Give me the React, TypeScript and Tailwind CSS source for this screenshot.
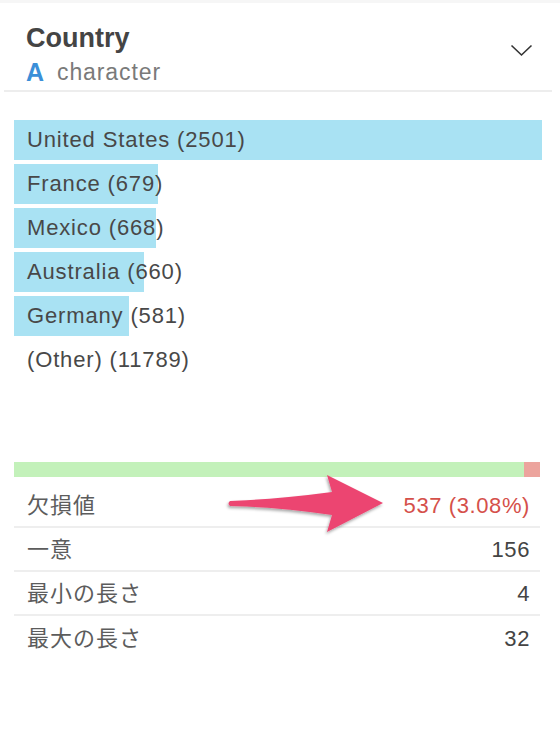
import React from 'react';

const bars = [
  { label: 'United States (2501)', width: 528 },
  { label: 'France (679)', width: 144 },
  { label: 'Mexico (668)', width: 142 },
  { label: 'Australia (660)', width: 130 },
  { label: 'Germany (581)', width: 115 },
  { label: '(Other) (11789)', width: 0 },
];

const stats = [
  { label: '欠損値', value: '537 (3.08%)', red: true },
  { label: '一意', value: '156' },
  { label: '最小の長さ', value: '4' },
  { label: '最大の長さ', value: '32' },
];

function Arrow() {
  return (
    <svg
      className="absolute left-[206px] top-[3px]"
      width="180"
      height="80"
      viewBox="0 0 180 80"
    >
      <defs>
        <filter id="arrowShadow" x="-20%" y="-30%" width="140%" height="160%">
          <feDropShadow dx="-1" dy="2" stdDeviation="1.6" floodColor="#000" floodOpacity="0.35" />
        </filter>
      </defs>
      <path
        d="M10 36 Q60 34 112 27 L107 10 L163 38 L107 67 L112 50 Q60 42 10 41 Q7 38.5 10 36 Z"
        fill="#ec4571"
        filter="url(#arrowShadow)"
      />
    </svg>
  );
}

export default function App() {
  return (
    <div className="min-h-screen w-full bg-white font-['Liberation_Sans','Noto_Sans_CJK_JP',sans-serif]">
      <div className="h-[3px] bg-[#f6f6f6]" />
      <div className="pl-[4px] pr-[8px]">
        <div className="flex justify-between pl-[22px] pr-[19px] pt-[19px] pb-[4px]">
          <div>
            <div className="text-[27px] leading-[32px] font-bold text-[#444444]">Country</div>
            <div className="mt-[4px] flex items-center text-[23px] leading-[28px]">
              <span className="w-[31px] text-[25px] font-bold text-[#3b8fd8]">A</span>
              <span className="tracking-[0.9px] text-[#7a7a7a]">character</span>
            </div>
          </div>
          <svg className="mt-[22px]" width="23" height="13" viewBox="0 0 23 13">
            <polyline points="1.5,1.5 11.5,11 21.5,1.5" fill="none" stroke="#333333" strokeWidth="1.6" />
          </svg>
        </div>
        <div className="h-[2px] bg-[#ededed]" />

        <div className="px-[10px]">
          <div className="mt-[28px] flex flex-col gap-1">
            {bars.map((b) => (
              <div
                key={b.label}
                className="h-[40px] bg-no-repeat pl-[13px] text-[22px] leading-[40px] tracking-[0.85px] text-[#484848]"
                style={{
                  backgroundImage: 'linear-gradient(#a9e2f3, #a9e2f3)',
                  backgroundSize: `${b.width}px 100%`,
                }}
              >
                {b.label}
              </div>
            ))}
          </div>

          <div className="relative mt-[82px] mr-[2px]">
            <div className="flex h-[15px]">
              <div className="flex-1 bg-[#c3f1ba]" />
              <div className="w-[16px] bg-[#eca49d]" />
            </div>
            <div className="mt-[7px] flex flex-col">
              {stats.map((s, i) => (
                <div
                  key={s.label}
                  className={`flex h-[44px] items-center justify-between pl-[13px] pr-[10px] ${
                    i < stats.length - 1 ? 'border-b-2 border-[#eeeeee]' : ''
                  }`}
                >
                  <span className="text-[22px] tracking-[1px] text-[#5c5c5c]">{s.label}</span>
                  <span
                    className={`text-[22px] tracking-[0.6px] ${s.red ? 'text-[#d5504a]' : 'text-[#444444]'}`}
                  >
                    {s.value}
                  </span>
                </div>
              ))}
            </div>
            <Arrow />
          </div>
        </div>
      </div>
    </div>
  );
}
